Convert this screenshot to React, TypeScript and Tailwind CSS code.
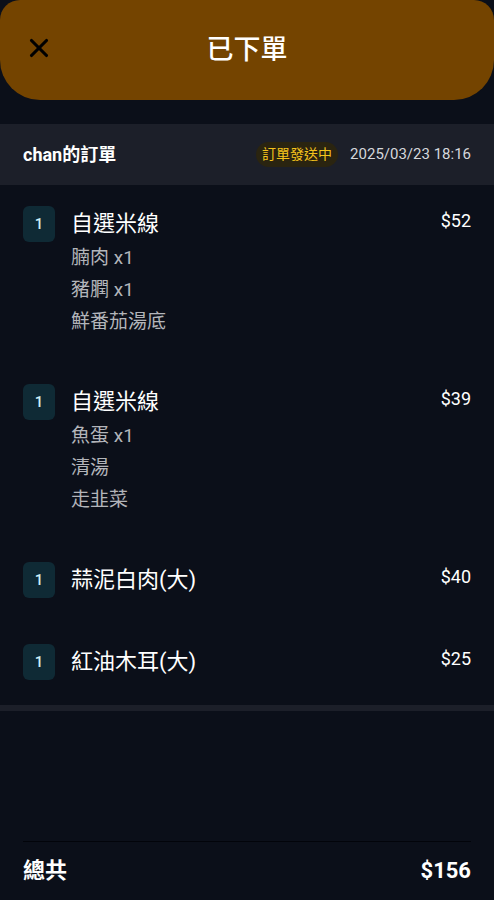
import { X } from 'lucide-react';

type Item = { name: string; price: number; qty: number; options: string[] };

const items: Item[] = [
  { name: '自選米線', price: 52, qty: 1, options: ['腩肉 x1', '豬膶 x1', '鮮番茄湯底'] },
  { name: '自選米線', price: 39, qty: 1, options: ['魚蛋 x1', '清湯', '走韭菜'] },
  { name: '蒜泥白肉(大)', price: 40, qty: 1, options: [] },
  { name: '紅油木耳(大)', price: 25, qty: 1, options: [] },
];

const font = { fontFamily: 'Roboto, "Noto Sans CJK TC", sans-serif' };

function OrderItem({ item }: { item: Item }) {
  return (
    <div className="flex items-start px-[23px]">
      <div className="w-8 h-9 rounded-md bg-[#0f2a35] flex items-center justify-center text-[#cfeff5] text-[15px] font-medium">
        {item.qty}
      </div>
      <div className="flex-1 ml-4">
        <div className="text-white text-[22px] leading-9">{item.name}</div>
        {item.options.map((o, i) => (
          <div key={i} className="text-[#b3b5ba] text-[19px] leading-8">
            {o}
          </div>
        ))}
      </div>
      <div className="text-white text-[18px] leading-[30px]">${item.price}</div>
    </div>
  );
}

export default function App() {
  const total = items.reduce((s, i) => s + i.price * i.qty, 0);
  return (
    <div className="w-[494px] h-[900px] bg-[#0b0f19] flex flex-col overflow-hidden" style={font}>
      <div className="h-[100px] bg-[#744400] rounded-t-[20px] rounded-b-[40px] relative flex items-center justify-center">
        <X className="absolute left-[24px] top-[33px] w-[30px] h-[30px] text-black" strokeWidth={2.5} />
        <span className="text-white text-[27px] font-medium">已下單</span>
      </div>

      <div className="mt-6 h-[61px] bg-[#1c1f29] flex items-center px-[23px]">
        <span className="text-white text-[18px] font-bold">chan的訂單</span>
        <span className="ml-auto bg-[#2a2410] text-[#f5c31c] text-[14px] px-1.5 py-0.5 rounded-full">
          訂單發送中
        </span>
        <span className="ml-3 text-[#d5d7dc] text-[15px]">2025/03/23 18:16</span>
      </div>

      <div className="flex flex-col gap-[46px] pt-[21px] pb-[25px]">
        {items.map((it, i) => (
          <OrderItem key={i} item={it} />
        ))}
      </div>

      <div className="h-[6px] bg-[#1c1f29]" />

      <div className="mt-auto mx-[23px] border-t border-[#02040a] flex items-center justify-between h-[58px] mb-[1px]">
        <span className="text-white text-[22px] font-bold">總共</span>
        <span className="text-white text-[22px] font-bold">${total}</span>
      </div>
    </div>
  );
}
